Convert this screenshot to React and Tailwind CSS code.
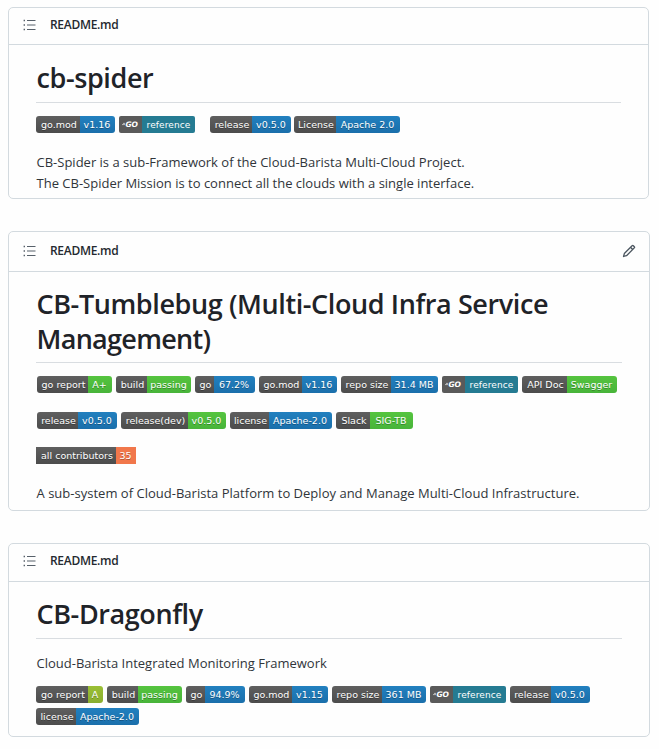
const blue = 'bg-[linear-gradient(#2280bf,#1a6fab)]';
const green = 'bg-[linear-gradient(#55c43f,#48b43a)]';
const lime = 'bg-[linear-gradient(#9abf35,#8aae2f)]';
const orange = 'bg-[#f1774b]';

function Badge({ label, value, lw, vw, tone, square = false }) {
  return (
    <span
      className={`flex h-[17px] shrink-0 overflow-hidden font-['DejaVu_Sans',Verdana,sans-serif] text-[9.5px] leading-[17px] whitespace-nowrap text-white [text-shadow:0_1px_0_rgba(1,1,1,0.3)] ${square ? '' : 'rounded-[3px]'}`}
    >
      <span className={`flex justify-center bg-[linear-gradient(#5f5f5f,#4c4c4c)] pl-[2px] ${lw}`}>{label}</span>
      <span className={`flex justify-center pr-px ${tone} ${vw}`}>{value}</span>
    </span>
  );
}

function GoReference() {
  return (
    <span className="flex h-[17px] shrink-0 overflow-hidden rounded-[2px] font-['DejaVu_Sans',Verdana,sans-serif] text-[9px] leading-[18px] text-white">
      <span className="flex w-[23px] items-center justify-center bg-[#5a5a5a] pr-px">
        <svg className="h-[5px] w-[3px]" viewBox="0 0 3 5" fill="none" stroke="#fff" strokeWidth="0.6">
          <path d="M1 1.4H3M0 2.6H3" />
        </svg>
        <span className="text-[7.5px] font-bold tracking-[-0.2px] italic">GO</span>
      </span>
      <span className="flex w-[53px] justify-center bg-[#257b92] tracking-[0.1px]">reference</span>
    </span>
  );
}

function ListIcon() {
  return (
    <svg className="h-[12px] w-[13px]" viewBox="0 0 13 12" fill="none" stroke="#57606a" strokeWidth="1.2">
      <path d="M4 1.5H12.5M4 6H12.5M4 10.5H12.5" />
      <path d="M0.6 1.5H2M0.6 6H2M0.6 10.5H2" strokeWidth="1.5" />
    </svg>
  );
}

function PencilIcon() {
  return (
    <svg className="h-[14px] w-[14px]" viewBox="0 0 16 16" fill="#4b555f">
      <path d="M11.013 1.427a1.75 1.75 0 0 1 2.474 0l1.086 1.086a1.75 1.75 0 0 1 0 2.474l-8.61 8.61c-.21.21-.47.364-.756.445l-3.251.93a.75.75 0 0 1-.927-.928l.929-3.25c.081-.286.235-.547.445-.758l8.61-8.61Zm.176 4.823L9.75 4.81l-6.286 6.287a.253.253 0 0 0-.064.108l-.558 1.953 1.953-.558a.253.253 0 0 0 .108-.064Zm1.238-3.763a.25.25 0 0 0-.354 0L10.811 3.75l1.439 1.44 1.263-1.263a.25.25 0 0 0 0-.354Z" />
    </svg>
  );
}

function Card({ size, headerSize, editable, children }) {
  return (
    <section className={`rounded-[5px] border border-[#d3dadf] ${size}`}>
      <header className={`flex items-center border-b border-[#d3dadf] pr-[13px] pl-[14px] ${headerSize}`}>
        <ListIcon />
        <span className="ml-[14px] flex-1 text-[12px] leading-4 font-semibold tracking-[-0.3px] text-[#24292f]">
          README.md
        </span>
        {editable && <PencilIcon />}
      </header>
      <div className="pr-[27px] pl-[27px]">{children}</div>
    </section>
  );
}

function Title({ size, children }) {
  return (
    <h1
      className={`border-b border-[#d9dde1] pl-[0.5px] text-[27px] leading-[35px] font-semibold tracking-[-0.4px] whitespace-nowrap text-[#1f2328] ${size}`}
    >
      {children}
    </h1>
  );
}

export default function App() {
  return (
    <main className="h-[749px] w-[659px] overflow-hidden bg-[#fefefe] pt-[7px] pl-[8px] font-['Open_Sans','Noto_Sans',sans-serif] text-[13px] text-[#30353a]">
      <Card size="h-[192px] w-[641px]" headerSize="h-[37px] pb-[2px]">
        <Title size="h-[58px] pt-[15px]">cb-spider</Title>
        <div className="mt-[13px] flex">
          <Badge label="go.mod" value="v1.16" lw="w-[44px]" vw="w-[35px]" tone={blue} />
          <span className="ml-[4px] flex"><GoReference /></span>
          <span className="ml-[15px] flex gap-[3px]">
            <Badge label="release" value="v0.5.0" lw="w-[42px]" vw="w-[39px]" tone={blue} />
            <Badge label="License" value="Apache 2.0" lw="w-[42px]" vw="w-[64px]" tone={blue} />
          </span>
        </div>
        <p className="mt-[19px] pl-[0.5px] leading-[21px] whitespace-nowrap">
          CB-Spider is a sub-Framework of the Cloud-Barista Multi-Cloud Project.
          <br />
          The CB-Spider Mission is to connect all the clouds with a single interface.
        </p>
      </Card>

      <Card size="mt-[32px] h-[280px] w-[642px]" headerSize="h-[40px] pb-[2px]" editable>
        <Title size="h-[91px] pt-[14px]">
          CB-Tumblebug (Multi-Cloud Infra Service
          <br />
          <span className="tracking-[-0.7px]">Management)</span>
        </Title>
        <div className="mt-[13px] flex gap-[4px] pl-px">
          <Badge label="go report" value="A+" lw="w-[51px]" vw="w-[24px]" tone={green} />
          <Badge label="build" value="passing" lw="w-[31px]" vw="w-[44px]" tone={green} />
          <Badge label="go" value="67.2%" lw="w-[19px]" vw="w-[41px]" tone={blue} />
          <Badge label="go.mod" value="v1.16" lw="w-[43px]" vw="w-[35px]" tone={blue} />
          <Badge label="repo size" value="31.4 MB" lw="w-[50px]" vw="w-[47px]" tone={blue} />
          <GoReference />
          <Badge label="API Doc" value="Swagger" lw="w-[45px]" vw="w-[50px]" tone={green} />
        </div>
        <div className="mt-[19px] flex gap-[4px] pl-px">
          <Badge label="release" value="v0.5.0" lw="w-[41px]" vw="w-[39px]" tone={blue} />
          <Badge label="release(dev)" value="v0.5.0" lw="w-[67px]" vw="w-[38px]" tone={green} />
          <Badge label="license" value="Apache-2.0" lw="w-[39px]" vw="w-[63px]" tone={blue} />
          <Badge label="Slack" value="SIG-TB" lw="w-[34px]" vw="w-[43px]" tone={green} />
        </div>
        <div className="mt-[18px] flex">
          <Badge label="all contributors" value="35" lw="w-[80px]" vw="w-[20px]" tone={orange} square />
        </div>
        <p className="mt-[19px] pl-[0.5px] leading-[21px] tracking-[0.015px] whitespace-nowrap">
          A sub-system of Cloud-Barista Platform to Deploy and Manage Multi-Cloud Infrastructure.
        </p>
      </Card>

      <Card size="mt-[32px] h-[194px] w-[642px]" headerSize="h-[38px] pb-[4px]">
        <Title size="h-[57px] pt-[14px]">CB-Dragonfly</Title>
        <p className="mt-[14px] pl-[0.5px] leading-[21px] whitespace-nowrap">Cloud-Barista Integrated Monitoring Framework</p>
        <div className="mt-[12px] flex gap-[4px]">
          <Badge label="go report" value="A" lw="w-[52px]" vw="w-[15px]" tone={lime} />
          <Badge label="build" value="passing" lw="w-[31px]" vw="w-[44px]" tone={green} />
          <Badge label="go" value="94.9%" lw="w-[19px]" vw="w-[40px]" tone={blue} />
          <Badge label="go.mod" value="v1.15" lw="w-[43px]" vw="w-[36px]" tone={blue} />
          <Badge label="repo size" value="361 MB" lw="w-[50px]" vw="w-[44px]" tone={blue} />
          <GoReference />
          <Badge label="release" value="v0.5.0" lw="w-[41px]" vw="w-[39px]" tone={blue} />
        </div>
        <div className="mt-[5px] flex">
          <Badge label="license" value="Apache-2.0" lw="w-[40px]" vw="w-[63px]" tone={blue} />
        </div>
      </Card>
    </main>
  );
}
